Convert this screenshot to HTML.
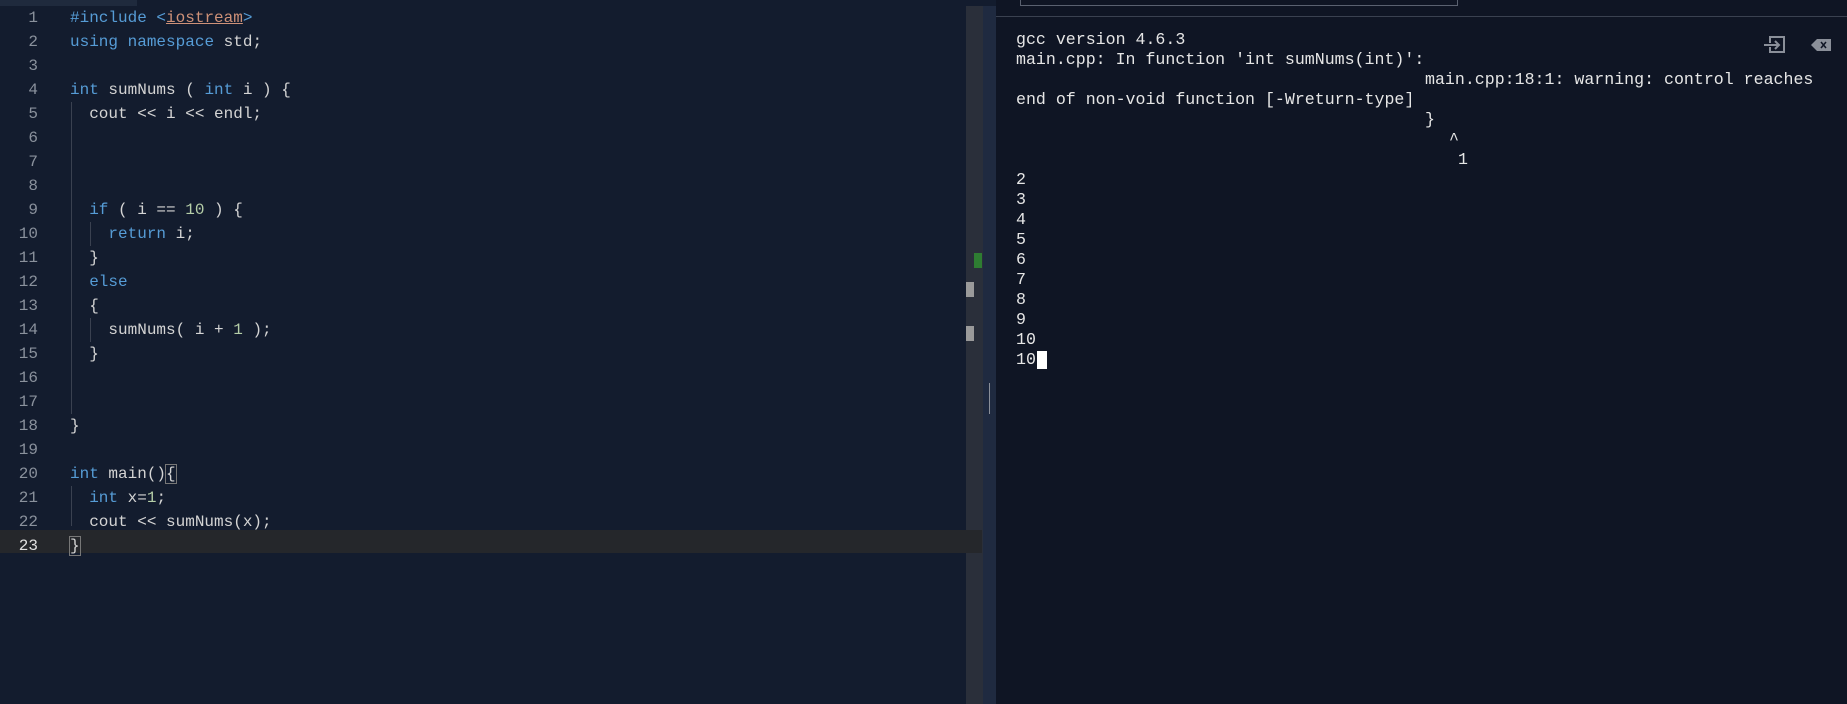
<!DOCTYPE html>
<html><head><meta charset="utf-8"><style>
*{margin:0;padding:0;box-sizing:border-box}
body{width:1847px;height:704px;overflow:hidden;background:#131c2e;position:relative;font-family:"Liberation Mono",monospace}
.ed{position:absolute;left:0;top:0;width:966px;height:704px;background:#131c2e}
.ln{position:absolute;left:0;width:38px;text-align:right;color:#8a919c;font-size:16px;line-height:24px}
.cl{position:absolute;left:70px;color:#d4d4d4;font-size:16px;line-height:24px;white-space:pre}
.k{color:#569cd6}.n{color:#b5cea8}.s{color:#ce9178}
.guide{position:absolute;width:1px;background:#3a4150}
.term{position:absolute;left:996px;top:0;width:851px;height:704px;background:#0f1524}
.t{position:absolute;color:#e6e6e6;font-size:16.6px;line-height:20px;white-space:pre;font-family:"Liberation Mono",monospace}
</style></head><body>
<div class="ed">
<div style="position:absolute;left:0;top:0;width:137px;height:6px;background:#1f2a3d"></div>
<div class="guide" style="left:71px;top:102px;height:312px"></div>
<div class="guide" style="left:71px;top:486px;height:40px"></div>
<div class="guide" style="left:90px;top:222px;height:24px"></div>
<div class="guide" style="left:90px;top:318px;height:24px"></div>
</div>
<div style="position:absolute;left:966px;top:6px;width:17px;height:698px;background:#2a2f3a"></div>
<div style="position:absolute;left:983px;top:6px;width:13px;height:698px;background:#1f2a40"></div>
<div style="position:absolute;left:0;top:530px;width:982px;height:23px;background:#25272b"></div>
<div style="position:absolute;left:974px;top:253px;width:8px;height:15px;background:#2e7d32"></div>
<div style="position:absolute;left:966px;top:282px;width:8px;height:15px;background:#9a9a9a"></div>
<div style="position:absolute;left:966px;top:326px;width:8px;height:15px;background:#9a9a9a"></div>
<div style="position:absolute;left:989px;top:383px;width:1px;height:31px;background:#8a8f99"></div>
<div class="term">
<div style="position:absolute;left:24px;top:0;width:438px;height:6px;border:1px solid #5a6170;border-top:none"></div>
<div style="position:absolute;left:0;top:16px;width:851px;height:1px;background:#3a4150"></div>
<svg style="position:absolute;left:763px;top:35px" width="90" height="20" viewBox="0 0 90 20">
<rect x="11" y="2" width="14" height="15" fill="none" stroke="#8a8f99" stroke-width="2"/>
<rect x="4" y="8" width="12" height="4" fill="#0f1524"/>
<path d="M5 10H20M16 6L20 10L16 14" fill="none" stroke="#8a8f99" stroke-width="2"/>
<path d="M52 10L58 4H72V16H58Z" fill="#8a8f99"/>
<path d="M62 7L67 13M67 7L62 13" stroke="#0f1524" stroke-width="1.5"/>
</svg>
<div class="t" style="left:20px;top:30px">gcc version 4.6.3
main.cpp: In function 'int sumNums(int)':</div>
<div class="t" style="left:429px;top:70px">main.cpp:18:1: warning: control reaches</div>
<div class="t" style="left:20px;top:90px">end of non-void function [-Wreturn-type]</div>
<div class="t" style="left:429px;top:110px">}</div>
<div class="t" style="left:453px;top:130px">^</div>
<div class="t" style="left:462px;top:150px">1</div>
<div class="t" style="left:20px;top:170px">2
3
4
5
6
7
8
9
10
10</div>
<div style="position:absolute;left:41px;top:351px;width:10px;height:18px;background:#fff"></div>
</div>
<div class="ln" style="top:6px">1<br>2<br>3<br>4<br>5<br>6<br>7<br>8<br>9<br>10<br>11<br>12<br>13<br>14<br>15<br>16<br>17<br>18<br>19<br>20<br>21<br>22<br><span style="color:#e0e0e0">23</span></div>
<div class="cl" style="top:6px"><span class="k">#include</span> <span class="k">&lt;</span><span class="s" style="text-decoration:underline">iostream</span><span class="k">&gt;</span>
<span class="k">using</span> <span class="k">namespace</span> std;

<span class="k">int</span> sumNums ( <span class="k">int</span> i ) {
  cout &lt;&lt; i &lt;&lt; endl;



  <span class="k">if</span> ( i == <span class="n">10</span> ) {
    <span class="k">return</span> i;
  }
  <span class="k">else</span>
  {
    sumNums( i + <span class="n">1</span> );
  }


}

<span class="k">int</span> main()<span style="outline:1px solid #777">{</span>
  <span class="k">int</span> x=<span class="n">1</span>;
  cout &lt;&lt; sumNums(x);
<span style="outline:1px solid #777">}</span></div>
</body></html>
